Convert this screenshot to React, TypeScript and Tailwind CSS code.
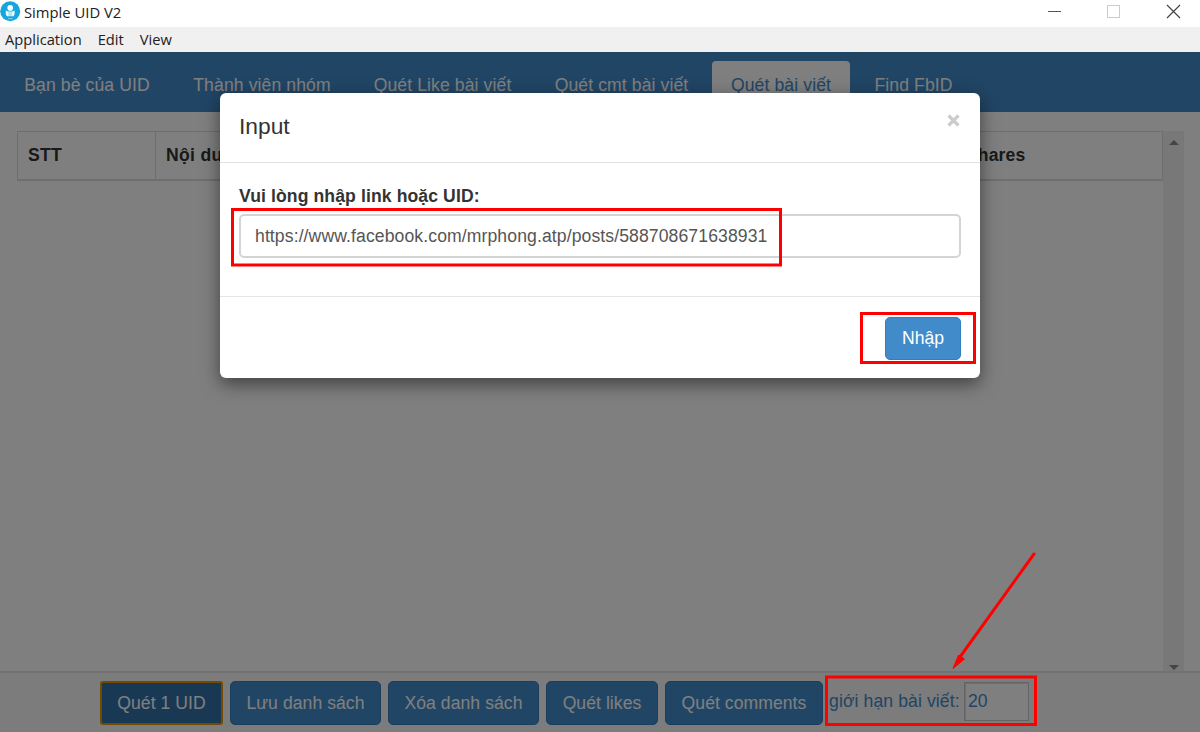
import React from "react";

const tabs = [
  { label: "Bạn bè của UID", size: "w-[164px]" },
  { label: "Thành viên nhóm", size: "w-[176px]" },
  { label: "Quét Like bài viết", size: "w-[175px]" },
  { label: "Quét cmt bài viết", size: "w-[173px]" },
  { label: "Quét bài viết", size: "w-[138px]", active: true },
  { label: "Find FbID", size: "w-[117px]" },
];

const actions = [
  { label: "Quét 1 UID", size: "w-[123px]", focused: true },
  { label: "Lưu danh sách", size: "w-[151px]" },
  { label: "Xóa danh sách", size: "w-[151px]" },
  { label: "Quét likes", size: "w-[112px]" },
  { label: "Quét comments", size: "w-[158px]" },
];

function TitleBar() {
  return (
    <div className="flex h-[27px] shrink-0 items-center bg-white font-['Open_Sans',sans-serif] text-[#222]">
      <svg className="mb-[5px] h-[21px] w-[21px]" viewBox="0 0 21 21">
        <circle cx="10.2" cy="10.3" r="10" fill="#16a6df" />
        <circle cx="10.2" cy="6.9" r="2.8" fill="#fff" />
        <path d="M5.8 9.4 9.2 11v4.2H6.8q-1.6-2.4-1-5.8Z" fill="#eefaff" />
        <path d="M14.6 9.4 11.2 11v4.2h2.4q1.6-2.4 1-5.8Z" fill="#eefaff" />
        <path d="M8.2 10.4h4v4.8h-4Z" fill="#b5e6f8" />
        <path d="M8 17.7h4.6" stroke="#7fd2f2" strokeWidth="1" />
      </svg>
      <span className="mb-[3px] ml-[3px] text-[14.8px] leading-none whitespace-nowrap">Simple UID V2</span>
      <svg className="ml-auto h-[27px] w-[160px]" viewBox="0 0 160 27" fill="none">
        <path d="M8 11.5h13" stroke="#555" />
        <rect x="67.5" y="5.5" width="12" height="12" stroke="#ccc" />
        <path d="m127 5 13 13m0-13-13 13" stroke="#444" strokeWidth="1.2" />
      </svg>
    </div>
  );
}

function MenuBar() {
  return (
    <div className="flex h-[25px] shrink-0 items-center gap-[16px] bg-[#f0f0f0] pb-px pl-[5px] font-['Open_Sans',sans-serif] text-[14.7px] leading-none text-[#222]">
      <span>Application</span>
      <span>Edit</span>
      <span>View</span>
    </div>
  );
}

function NavBar() {
  return (
    <nav className="flex h-[60px] shrink-0 gap-[5px] bg-[#428bca] pt-[9px] pl-[5px] tracking-[0.1px]">
      {tabs.map((tab) => (
        <div
          key={tab.label}
          className={`${tab.size} flex h-[50px] items-center justify-center rounded-t-[4px] whitespace-nowrap ${
            tab.active ? "-ml-px bg-white text-[#428bca]" : "text-white"
          }`}
        >
          {tab.label}
        </div>
      ))}
    </nav>
  );
}

function Results() {
  return (
    <div className="flex min-h-0 flex-1 pt-[19px] pr-[16px] pl-[17px]">
      <div className="flex-1">
        <div className="flex h-[50px] border border-b-2 border-[#ddd] font-bold tracking-[0.3px]">
          <div className="flex w-[138px] items-center border-r border-[#ddd] pl-[10px]">STT</div>
          <div className="flex w-[810px] items-center pl-[10px]">Nội dung</div>
          <div className="flex items-center tracking-[0.1px]">Shares</div>
        </div>
      </div>
      <div className="flex w-[21px] flex-col items-center justify-between bg-[#f1f1f1] pt-[9px] pb-px">
        <svg className="h-[5px] w-[10px]" viewBox="0 0 10 5">
          <path d="M0 5 5 0l5 5Z" fill="#8a8a8a" />
        </svg>
        <svg className="h-[5px] w-[10px]" viewBox="0 0 10 5">
          <path d="m0 0 5 5 5-5Z" fill="#8a8a8a" />
        </svg>
      </div>
    </div>
  );
}

function Footer() {
  return (
    <div className="flex h-[61px] shrink-0 gap-[7px] border-t-2 border-[#e4e4e4] bg-[#f8f8f8] pt-[8px] pl-[100px]">
      {actions.map((a) => (
        <div
          key={a.label}
          className={`${a.size} flex h-[44px] items-center justify-center pt-px tracking-[0.05px] whitespace-nowrap text-white ${
            a.focused
              ? "rounded-[3px] border-2 border-[#e59700] bg-[#3071a9]"
              : "rounded-[5px] border border-[#357ebd] bg-[#428bca]"
          }`}
        >
          {a.label}
        </div>
      ))}
      <div className="-ml-px flex h-[40px] items-center text-[#428bca]">
        <span className="w-[135px] pt-[2px] tracking-[0.1px] whitespace-nowrap">giới hạn bài viết:</span>
        <div className="flex h-[39px] w-[65px] items-center border border-[#c9c9c9] bg-white pt-px pl-[3px] shadow-[inset_1px_1px_0_#dedede]">
          20
        </div>
      </div>
    </div>
  );
}

function Modal() {
  return (
    <div className="absolute top-[93px] left-[220px] flex h-[285px] w-[760px] flex-col rounded-[6px] bg-white text-[#333] shadow-[0_6px_18px_rgba(0,0,0,0.5)]">
      <div className="flex h-[70px] shrink-0 justify-between border-b border-[#e2e2e2] pr-[19px] pl-[19px]">
        <h4 className="pt-[19px] text-[22.8px] leading-[28px]">Input</h4>
        <svg className="mt-[21px] mr-px h-[13px] w-[13px]" viewBox="0 0 13 13">
          <path d="m1.5 1.5 10 10m0-10-10 10" stroke="#ccc" strokeWidth="3.2" />
        </svg>
      </div>
      <div className="flex h-[134px] shrink-0 flex-col border-b border-[#e5e5e5] px-[19px] pt-[23px]">
        <label className="h-[28px] leading-[20px] font-bold tracking-[0.1px]">Vui lòng nhập link hoặc UID:</label>
        <div className="flex h-[44px] items-center rounded-[5px] border-2 border-[#d4d4d4] pt-px pl-[14px] tracking-[0.1px] text-[#555]">
          https://www.facebook.com/mrphong.atp/posts/588708671638931
        </div>
      </div>
      <div className="flex justify-end pt-[20px] pr-[19px]">
        <button className="flex h-[43px] w-[76px] items-center justify-center rounded-[5px] border border-[#357ebd] bg-[#428bca] text-white">
          Nhập
        </button>
      </div>
    </div>
  );
}

function Annotations() {
  return (
    <svg className="pointer-events-none absolute inset-0 h-[732px] w-[1200px]" viewBox="0 0 1200 732" fill="none">
      <g stroke="#f00" strokeWidth="3">
        <rect x="232.5" y="209.5" width="548" height="55.5" />
        <rect x="861.5" y="313.5" width="113" height="49" />
        <rect x="826.5" y="677" width="209" height="47.5" />
        <path d="M1034 554 960 657" strokeLinecap="round" />
      </g>
      <path d="m953 668.5 5.5-13.5 6 4Z" fill="#f00" stroke="#f00" />
    </svg>
  );
}

export default function App() {
  return (
    <div className="relative flex h-[732px] w-[1200px] flex-col overflow-hidden bg-white font-['Liberation_Sans',Arial,sans-serif] text-[17.6px] leading-none text-[#333]">
      <TitleBar />
      <MenuBar />
      <div className="relative flex min-h-0 flex-1 flex-col">
        <NavBar />
        <Results />
        <Footer />
        <div className="absolute inset-0 bg-black/50" />
      </div>
      <Modal />
      <Annotations />
    </div>
  );
}
